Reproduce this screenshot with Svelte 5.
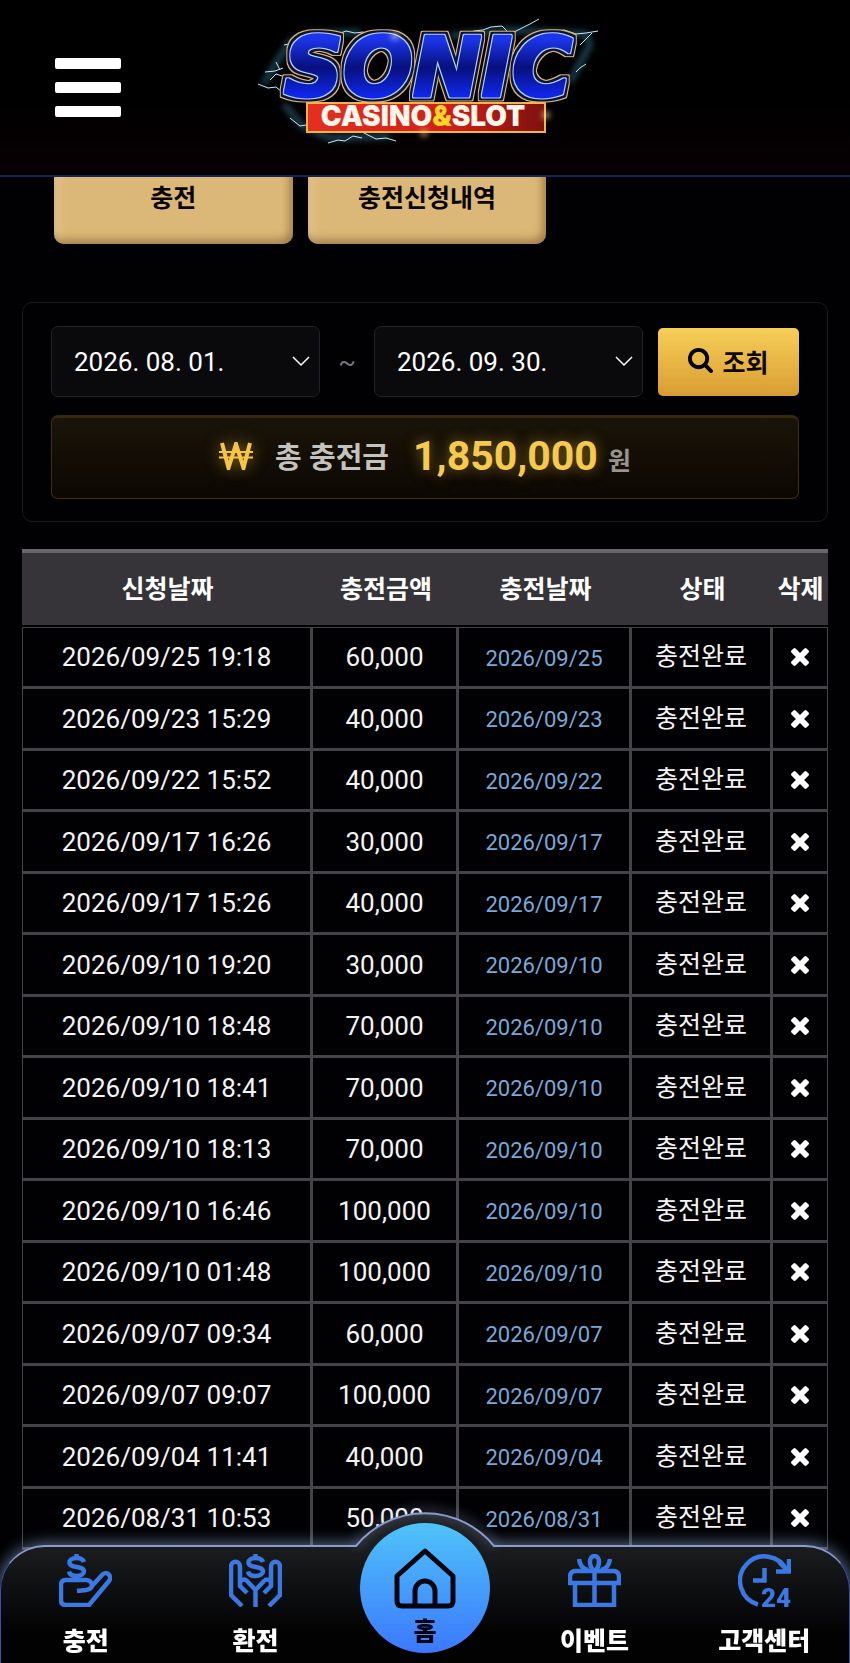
<script lang="ts">
    import { onMount } from "svelte";

    interface Deposit {
        requested: string;
        amount: number;
        paid: string;
    }

    const fromDates = ['2026. 08. 01.', '2026. 09. 01.'];
    const toDates = ['2026. 08. 31.', '2026. 09. 30.'];
    const total = 1850000;

    let from = fromDates[0];
    let to = toDates[1];
    let menuOpen = false;

    let deposits: Deposit[] = [
        { requested: '2026/09/25 19:18', amount: 60000, paid: '2026/09/25' },
        { requested: '2026/09/23 15:29', amount: 40000, paid: '2026/09/23' },
        { requested: '2026/09/22 15:52', amount: 40000, paid: '2026/09/22' },
        { requested: '2026/09/17 16:26', amount: 30000, paid: '2026/09/17' },
        { requested: '2026/09/17 15:26', amount: 40000, paid: '2026/09/17' },
        { requested: '2026/09/10 19:20', amount: 30000, paid: '2026/09/10' },
        { requested: '2026/09/10 18:48', amount: 70000, paid: '2026/09/10' },
        { requested: '2026/09/10 18:41', amount: 70000, paid: '2026/09/10' },
        { requested: '2026/09/10 18:13', amount: 70000, paid: '2026/09/10' },
        { requested: '2026/09/10 16:46', amount: 100000, paid: '2026/09/10' },
        { requested: '2026/09/10 01:48', amount: 100000, paid: '2026/09/10' },
        { requested: '2026/09/07 09:34', amount: 60000, paid: '2026/09/07' },
        { requested: '2026/09/07 09:07', amount: 100000, paid: '2026/09/07' },
        { requested: '2026/09/04 11:41', amount: 40000, paid: '2026/09/04' },
        { requested: '2026/08/31 10:53', amount: 50000, paid: '2026/08/31' }
    ];

    function money(value: number) {
        return value.toLocaleString('en-US');
    }

    function remove(row: Deposit) {
        deposits = deposits.filter((d) => d !== row);
    }

    onMount(() => {
        document.documentElement.lang = 'ko';
    });
</script>

<header>
    <button class="menu" aria-label="메뉴" aria-expanded={menuOpen} on:click={() => (menuOpen = !menuOpen)}>
        <span></span>
        <span></span>
        <span></span>
    </button>
    <a class="logo" href="#home" aria-label="Sonic Casino & Slot">
        <svg viewBox="0 0 370 175" width="370" height="175">
            <defs>
                <linearGradient id="blue" x1="0" y1="0" x2="0" y2="1">
                    <stop offset="0.2" stop-color="#1c35ea" />
                    <stop offset="0.5" stop-color="#07107c" />
                    <stop offset="0.8" stop-color="#1027ea" />
                </linearGradient>
                <linearGradient id="red" x1="0" y1="0" x2="1" y2="0">
                    <stop offset="0" stop-color="#e5301f" />
                    <stop offset="0.6" stop-color="#cf1f16" />
                    <stop offset="1" stop-color="#7d120f" />
                </linearGradient>
                <filter id="glow" x="-200%" y="-200%" width="500%" height="500%">
                    <feGaussianBlur stdDeviation="3" />
                </filter>
                <!-- light edge, navy band and gold rim round the wordmark -->
                <filter id="rims" x="-10%" y="-20%" width="120%" height="140%" color-interpolation-filters="sRGB">
                    <feMorphology in="SourceAlpha" operator="dilate" radius="1" result="a1" />
                    <feMorphology in="SourceAlpha" operator="dilate" radius="3" result="a2" />
                    <feMorphology in="SourceAlpha" operator="dilate" radius="4" result="a3" />
                    <feFlood flood-color="#b9d2ff" />
                    <feComposite in2="a1" operator="in" result="edge" />
                    <feFlood flood-color="#061443" />
                    <feComposite in2="a2" operator="in" result="navy" />
                    <feFlood flood-color="#e6b460" />
                    <feComposite in2="a3" operator="in" result="gold" />
                    <feMerge>
                        <feMergeNode in="gold" />
                        <feMergeNode in="navy" />
                        <feMergeNode in="edge" />
                        <feMergeNode in="SourceGraphic" />
                    </feMerge>
                </filter>
            </defs>
            <g class="haze" filter="url(#glow)">
                <path d="M24 84 38 60 50 42 70 34 120 32M210 36 268 30 346 34 350 45 330 82M44 104 62 126 90 138 150 136" />
            </g>
            <g class="bolt">
                <path d="M98 34l8-3 9 2 8-1 9 3M222 37l12-6 9-1 8-3 11-1 8 8 6-3 14-7 9-5M310 33l14-3 12 4 10-1 12-2M340 45l8-8 4-4M18 84l10 4 8-1 6 5M25 72l10-1 8-3M36 62l4 8M30 80l6-6 6 2M44 45l10-2 9 1M50 118l10 8 6-1M88 143l10-3 7 1 8-5 9 2M122 132l14 7 10-1 10 3M336 72l4-4 6-4" />
            </g>
            <text class="sonic" x="44" y="96" filter="url(#rims)">SONIC</text>
            <rect x="67" y="103" width="238" height="29" fill="url(#red)" stroke="#f0b54a" stroke-width="2" />
            <text class="slot" x="183" y="126">CASINO<tspan>&amp;</tspan>SLOT</text>
            <circle cx="155" cy="36" r="3" fill="#fff3c4" filter="url(#glow)" />
            <circle cx="306" cy="115" r="3" fill="#fff3c4" filter="url(#glow)" />
            <circle cx="184" cy="133" r="3" fill="#ffd27a" filter="url(#glow)" />
        </svg>
    </a>
</header>

<main>
    <div class="tabs">
        <button>충전</button>
        <button>충전신청내역</button>
    </div>

    <section class="filter">
        <div class="range">
            <select bind:value={from} aria-label="시작일">
                {#each fromDates as date}
                    <option>{date}</option>
                {/each}
            </select>
            <span class="tilde">~</span>
            <select bind:value={to} aria-label="종료일">
                {#each toDates as date}
                    <option>{date}</option>
                {/each}
            </select>
            <button class="search">
                <svg viewBox="64 128 1664 1664" width="25" height="25">
                    <path d="M1216 832q0-185-131.5-316.500t-316.500-131.500-316.500 131.500-131.500 316.500 131.500 316.500 316.500 131.500 316.500-131.500 131.500-316.500zM1728 1664q0 52-38 90t-90 38q-54 0-90-38l-343-342q-179 124-399 124-143 0-273.500-55.500t-225-150-150-225-55.500-273.500 55.500-273.500 150-225 225-150 273.500-55.500 273.500 55.500 225 150 150 225 55.500 273.500q0 220-124 399l343 343q37 37 37 90z" />
                </svg>
                조회
            </button>
        </div>
        <div class="total">
            <svg class="won" viewBox="0 0 34 28" width="34" height="28">
                <path d="M3 1 9.5 26 17 2 24.5 26 31 1" />
                <path class="bar" d="M0 10H34M0 15.5H34" />
            </svg>
            <span class="label">총 충전금</span>
            <strong>{money(total)}</strong>
            <span class="unit">원</span>
        </div>
    </section>

    <table>
        <colgroup>
            <col />
            <col class="amount" />
            <col class="paid" />
            <col class="state" />
            <col class="del" />
        </colgroup>
        <thead>
            <tr>
                <th>신청날짜</th>
                <th>충전금액</th>
                <th>충전날짜</th>
                <th>상태</th>
                <th>삭제</th>
            </tr>
        </thead>
        <tbody>
            {#each deposits as row (row.requested)}
                <tr>
                    <td>{row.requested}</td>
                    <td>{money(row.amount)}</td>
                    <td class="date">{row.paid}</td>
                    <td class="done">충전완료</td>
                    <td>
                        <button class="remove" aria-label="삭제" on:click={() => remove(row)}>
                            <svg viewBox="110 366 1188 1188" width="18" height="18">
                                <path d="M1298 1322q0 40-28 68l-136 136q-28 28-68 28t-68-28l-294-294-294 294q-28 28-68 28t-68-28l-136-136q-28-28-28-68t28-68l294-294-294-294q-28-28-28-68t28-68l136-136q28-28 68-28t68 28l294 294 294-294q28-28 68-28t68 28l136 136q28 28 28 68t-28 68l-294 294 294 294q28 28 28 68z" />
                            </svg>
                        </button>
                    </td>
                </tr>
            {/each}
        </tbody>
    </table>
</main>

<nav>
    <svg class="hump" viewBox="0 0 170 60" width="170" height="60">
        <defs>
            <linearGradient id="humpFill" x1="0" y1="0" x2="0" y2="1">
                <stop offset="0" stop-color="#202326" />
                <stop offset="1" stop-color="#1a1c1e" />
            </linearGradient>
        </defs>
        <path d="M16 55A89 89 0 0 1 154 55V60H16Z" fill="url(#humpFill)" />
        <path class="rim" d="M14 55H16A89 89 0 0 1 154 55H156" />
    </svg>
    <a href="#deposit">
        <svg class="icon" viewBox="0 0 53 53" width="53" height="53">
            <path d="M25 8C24 5 21 4 17.5 4 13 4 10.5 6 10.5 8.5 10.5 15 25 11 25 17.5 25 20 22 22 17.5 22 13 22 10.5 20 10 17.5M17.5 0V4M17.5 22V26" />
            <path d="M18 37 27 36Q33 35 33 31 32 26 27 26H7Q2 26 2 31V46Q2 51 7 51H30L50 27C54 22 47 16 43 21L32 33" />
        </svg>
        <span>충전</span>
    </a>
    <a href="#withdraw">
        <svg class="icon" viewBox="0 0 53 53" width="53" height="53">
            <path d="M34 8C33 5 30 4 26.5 4 22 4 19.5 6 19.5 8.5 19.5 15 34 11 34 17.5 34 20 31 22 26.5 22 22 22 19.5 20 19 17.5M26.5 0V4M26.5 22V24" />
            <path d="M13 52 2 41V13C2 6 11 6 11 13V32L18 39M11 28C13 25 16 25 18 27L26.5 36V53M40 52 51 41V13C51 6 42 6 42 13V32L35 39M42 28C40 25 37 25 35 27L26.5 36" />
        </svg>
        <span>환전</span>
    </a>
    <a class="home" href="#home">
        <svg viewBox="0 0 62 61" width="62" height="61">
            <path d="M31 3 59 28V53Q59 58 54 58H8Q3 58 3 53V28ZM21 58V43A10 10 0 0 1 41 43V58" />
        </svg>
        <span>홈</span>
    </a>
    <a href="#event">
        <svg class="icon" viewBox="0 0 53 53" width="53" height="53">
            <path d="M2 29V23Q2 17 8 17H45Q51 17 51 23V29ZM7 29V51H46V29M26.5 17V51" />
            <path d="M26.5 17C20 12 21 2 26.5 2 32 2 33 12 26.5 17M11 5Q12 14 20 16M42 5Q41 14 33 16" />
        </svg>
        <span>이벤트</span>
    </a>
    <a href="#support">
        <svg class="icon" viewBox="0 0 53 53" width="53" height="53">
            <path d="M20 50.5A24.5 24.5 0 1 1 49 17" />
            <path d="M51 5V17.5H38M41 8 50 17M26.5 14V26.5H15" />
            <text x="23" y="53">24</text>
        </svg>
        <span>고객센터</span>
    </a>
</nav>

<style>
:global(body) {
    background-color: #010103;
    color: #fff;
    font-family: Roboto, "Noto Sans CJK KR", sans-serif;
}

header, main, nav, button, select, td, th {
    box-sizing: border-box;
}

button, select {
    font-family: inherit;
    border: none;
    cursor: pointer;
}

header {
    position: sticky;
    top: 0;
    z-index: 2;
    display: grid;
    grid-template-columns: 1fr auto 1fr;
    align-items: center;
    background: linear-gradient(#000 50%, #070002);
    border-bottom: 2px solid #17235c;
}

.menu {
    display: flex;
    flex-direction: column;
    gap: 13px;
    width: 66px;
    margin-left: 55px;
    padding: 0;
    background: none;
}

.menu span {
    height: 11px;
    border-radius: 2px;
    background-color: #fff;
}

.logo svg {
    display: block;
}

.haze path {
    fill: none;
    stroke: #3a86a8;
    stroke-width: 5;
    opacity: 0.6;
}

.bolt path {
    fill: none;
    stroke: #c4ecf6;
    stroke-width: 1;
}

.sonic {
    font: italic 700 82px "DejaVu Sans", sans-serif;
    stroke-linejoin: round;
    fill: url(#blue);
    stroke: url(#blue);
    stroke-width: 3;
}

.slot {
    font: 900 28px Inter, sans-serif;
    fill: #fff6ea;
    text-anchor: middle;
}

.slot tspan {
    fill: #fbd42c;
}

main {
    margin-top: -25px;
    padding: 0 22px 114px;
}

.tabs {
    display: grid;
    grid-template-columns: repeat(3, 1fr);
    gap: 15px;
    padding: 0 28px 0 32px;
}

.tabs button {
    height: 92px;
    padding: 0 0 4px;
    border-radius: 10px;
    background-color: #dcb878;
    box-shadow: inset -3px -4px 8px rgba(90, 60, 10, 0.5), inset 4px 0 8px rgba(255, 230, 200, 0.4);
    font-size: 25px;
    font-weight: 700;
    color: #0a0505;
}

.filter {
    margin-top: 58px;
    padding: 23px 28px 22px;
    border: 1px solid #1a1a1d;
    border-radius: 10px;
}

.range {
    display: flex;
    align-items: center;
}

.range select {
    flex: 1;
    min-width: 0;
    height: 71px;
    padding: 0 22px;
    border: 1px solid #222226;
    border-radius: 7px;
    appearance: none;
    background: #0a090c url("data:image/svg+xml,%3Csvg xmlns='http://www.w3.org/2000/svg' width='18' height='11' fill='none' stroke='white' stroke-width='1.5'%3E%3Cpath d='M1 1l8 8 8-8'/%3E%3C/svg%3E") no-repeat right 9px center;
    font-size: 26px;
    color: #fff;
}

.tilde {
    width: 54px;
    text-align: center;
    font-size: 26px;
    color: #77757a;
}

.search {
    display: flex;
    align-items: center;
    justify-content: center;
    gap: 9px;
    width: 141px;
    height: 68px;
    margin-left: 15px;
    padding: 0 0 2px;
    border-radius: 5px;
    background: linear-gradient(#f6cf58, #d99c32);
    font-size: 25px;
    font-weight: 700;
    color: #0c0803;
}

.total {
    display: flex;
    align-items: center;
    justify-content: center;
    height: 76px;
    margin-top: 18px;
    padding-bottom: 4px;
    border: 1px solid #3f2f12;
    border-top: 3px solid #342812;
    border-radius: 7px;
    background: linear-gradient(#1a1408, #0c0702);
}

.won {
    margin-right: 22px;
    fill: none;
    stroke: #f6c544;
    stroke-width: 4;
    filter: drop-shadow(0 0 8px rgba(246, 197, 68, 0.5));
}

.won .bar {
    stroke-width: 2;
}

.label {
    margin-right: 24px;
    padding-bottom: 2px;
    font-size: 29px;
    font-weight: 700;
    color: #c4c2bf;
}

.total strong {
    margin-right: 10px;
    font-size: 41px;
    color: #f6c94f;
    text-shadow: 0 0 14px rgba(246, 197, 68, 0.5);
}

.unit {
    padding-top: 6px;
    font-size: 25px;
    font-weight: 700;
    color: #98948e;
}

table {
    width: 100%;
    margin-top: 27px;
    border-spacing: 0;
    table-layout: fixed;
}

.amount {
    width: 146px;
}

.paid {
    width: 173px;
}

.state {
    width: 141px;
}

.del {
    width: 55px;
}

th {
    height: 78px;
    padding: 0 0 4px;
    border-top: 4px solid #69676b;
    border-bottom: 2px solid #010103;
    background-color: #363438;
    font-size: 25px;
    font-weight: 700;
    white-space: nowrap;
}

td {
    height: 61px;
    padding: 0;
    border: 0 solid #454347;
    border-width: 0 3px 3px 0;
    text-align: center;
    font-size: 26px;
    line-height: 32px;
    color: #f4f4f4;
}

tr:nth-child(even) td {
    height: 62px;
}

tr:first-child td {
    height: 62px;
    border-top-width: 1px;
}

td:first-child {
    border-left-width: 1px;
}

td:last-child {
    border-right-width: 1px;
}

td.date {
    padding-top: 3px;
    font-size: 22px;
    color: #78a9d8;
}

td.done {
    font-size: 25px;
}

.remove {
    display: block;
    width: 100%;
    padding: 0;
    background: none;
    line-height: 0;
}

.remove svg {
    fill: #fff;
}

nav {
    position: fixed;
    bottom: 0;
    left: 0;
    right: 0;
    z-index: 2;
    display: grid;
    grid-template-columns: repeat(5, 1fr);
    height: 118px;
    border: 1px solid;
    border-width: 2px 1px 0;
    border-color: #8a9bd0 #3c4fa8;
    border-radius: 45px 45px 0 0;
    background: linear-gradient(#1a1c1e, #020203 75%);
    box-shadow: 0 0 16px 1px rgba(160, 190, 240, 0.6);
}

.hump {
    position: absolute;
    top: -56px;
    left: 50%;
    overflow: visible;
    transform: translateX(-50%);
}

.rim {
    fill: none;
    stroke: #8a9bd0;
    stroke-width: 2;
    filter: drop-shadow(0 -2px 6px rgba(180, 205, 250, 0.9));
}

nav a {
    position: relative;
    display: flex;
    flex-direction: column;
    align-items: center;
    gap: 17px;
    padding-top: 7px;
    font-size: 25px;
    font-weight: 800;
    line-height: 36px;
    color: #fff;
    text-decoration: none;
}

.icon {
    fill: none;
    stroke: #3b78e4;
    stroke-width: 4.5;
}

.icon text {
    font: 900 26px Roboto, sans-serif;
    fill: #3b78e4;
    stroke: none;
}

nav .home {
    box-sizing: border-box;
    justify-self: center;
    gap: 5px;
    width: 130px;
    height: 130px;
    margin-top: -24px;
    padding-top: 25px;
    border-radius: 50%;
    background: linear-gradient(#4fc3f9, #3b78fd);
    color: #050510;
}

.home svg {
    fill: none;
    stroke: #050510;
    stroke-width: 5;
    stroke-linejoin: round;
}
</style>
